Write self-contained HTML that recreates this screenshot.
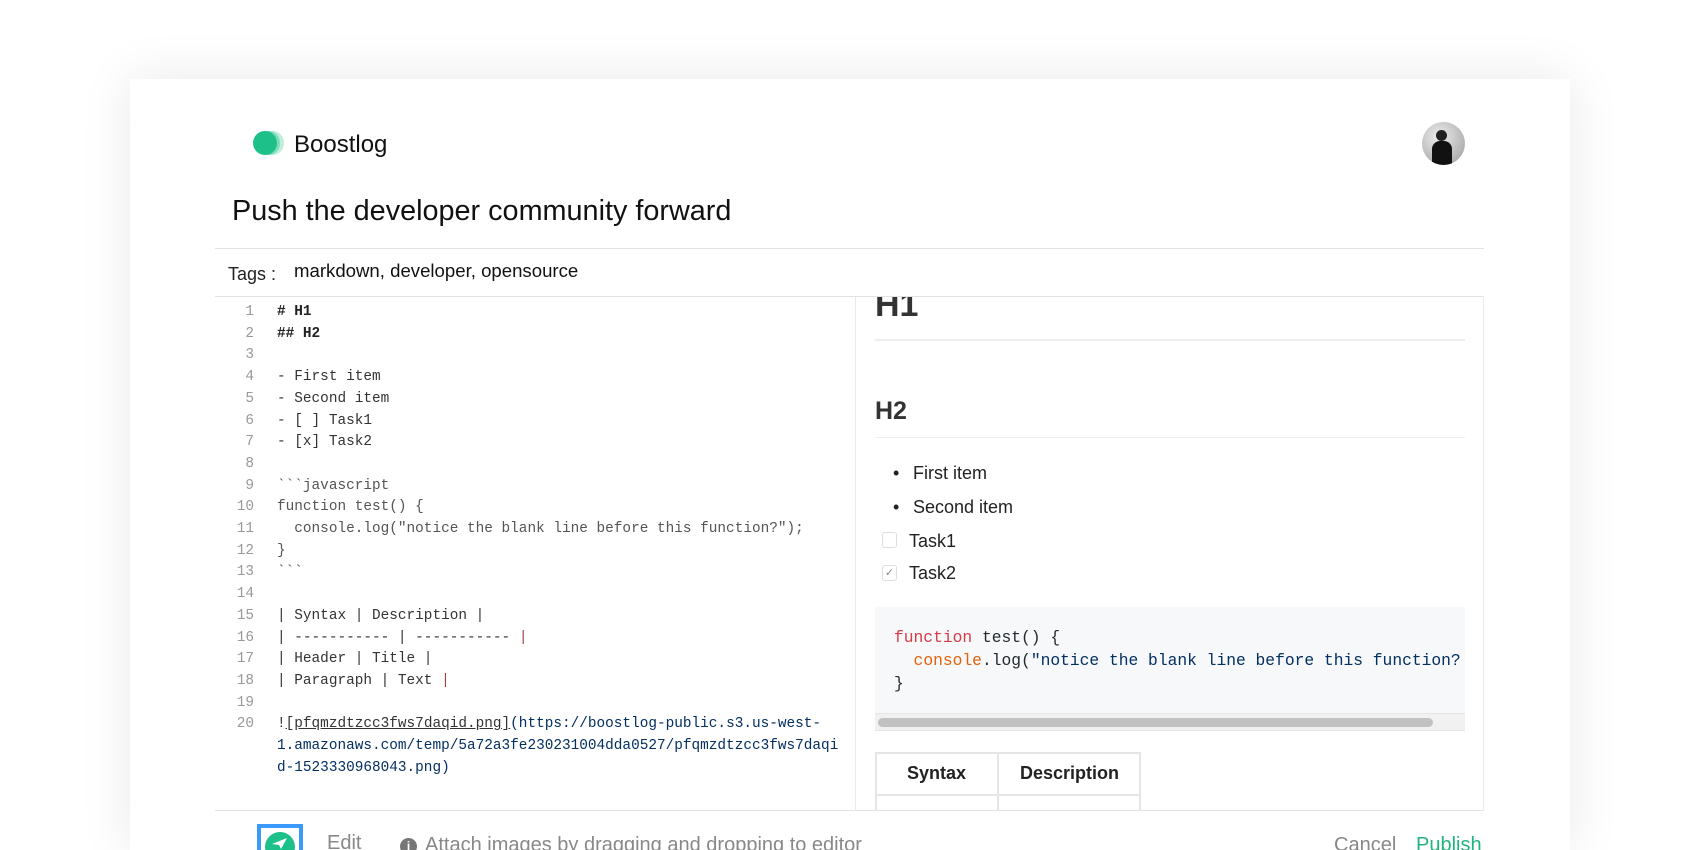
<!DOCTYPE html>
<html><head><meta charset="utf-8"><style>
*{margin:0;padding:0;box-sizing:border-box}
html,body{width:1700px;height:850px;overflow:hidden}
body{background:#fff;font-family:"Liberation Sans",sans-serif;position:relative}
.card{position:absolute;left:130px;top:79px;width:1440px;height:771px;background:#fff;box-shadow:0 0 50px rgba(0,0,0,0.09)}
.a{position:absolute;white-space:pre}
.mono{font-family:"Liberation Mono",monospace;font-size:14.4px;line-height:21.7px}
.ln{position:absolute;left:215px;width:39px;text-align:right;color:#999}
.cd{position:absolute;left:277px;color:#333}
</style></head><body>
<div class="card"></div>
<!-- logo -->
<div class="a" style="left:262px;top:131px;width:22px;height:24px;border-radius:50%;background:#bfeedd"></div>
<div class="a" style="left:258px;top:131px;width:22px;height:24px;border-radius:50%;background:#7fdcb9"></div>
<div class="a" style="left:253px;top:131px;width:24px;height:24px;border-radius:50%;background:#1ec08a"></div>
<div class="a" style="left:294px;top:131px;font-size:24px;color:#111">Boostlog</div>
<!-- avatar -->
<div class="a" style="left:1422px;top:122px;width:43px;height:43px;border-radius:50%;background:radial-gradient(circle at 40% 35%,#eee,#bbb 60%,#999);overflow:hidden">
<div style="position:absolute;left:14px;top:8px;width:11px;height:11px;border-radius:50%;background:#222"></div>
<div style="position:absolute;left:10px;top:19px;width:20px;height:26px;border-radius:8px 8px 0 0;background:#111"></div>
</div>
<div class="a" style="left:232px;top:195px;font-size:28.8px;color:#111">Push the developer community forward</div>
<div class="a" style="left:215px;top:248px;width:1269px;height:1px;background:#dfe2e6"></div>
<div class="a" style="left:228px;top:264px;font-size:18px;color:#222">Tags :</div>
<div class="a" style="left:294px;top:260px;font-size:18.6px;color:#111">markdown, developer, opensource</div>
<div class="a" style="left:215px;top:296px;width:1269px;height:515px;border-top:1px solid #dfe2e6;border-bottom:1px solid #dfe2e6;border-right:1px solid #e8eaed"></div>
<div class="a" style="left:855px;top:297px;width:1px;height:514px;background:#e8eaed"></div>
<!-- editor -->
<div class="mono">
<div class="ln" style="top:302px">1<br>2<br>3<br>4<br>5<br>6<br>7<br>8<br>9<br>10<br>11<br>12<br>13<br>14<br>15<br>16<br>17<br>18<br>19<br>20</div>
<div class="cd" style="top:302px;white-space:pre"><b style="color:#222"># H1</b>
<b style="color:#222">## H2</b>

- First item
- Second item
- [ ] Task1
- [x] Task2

<span style="color:#555">&#96;&#96;&#96;javascript
function test() {
  console.log("notice the blank line before this function?");
}
&#96;&#96;&#96;</span>

| Syntax | Description |
| ----------- | ----------- <span style="color:#944">|</span>
| Header | Title |
| Paragraph | Text <span style="color:#944">|</span>

!<u>[pfqmzdtzcc3fws7daqid.png]</u><span style="color:#032f62">(https://boostlog-public.s3.us-west-
1.amazonaws.com/temp/5a72a3fe230231004dda0527/pfqmzdtzcc3fws7daqi
d-1523330968043.png)</span></div>
</div>
<!-- preview -->
<div class="a" style="left:856px;top:297px;width:627px;height:513px;overflow:hidden">
<div class="a" style="left:19px;top:-11px;font-size:34px;font-weight:bold;color:#333">H1</div>
<div class="a" style="left:19px;top:42px;width:590px;height:2px;background:#eee"></div>
<div class="a" style="left:19px;top:100px;font-size:25px;font-weight:bold;color:#333">H2</div>
<div class="a" style="left:19px;top:140px;width:590px;height:1px;background:#eee"></div>
<div class="a" style="left:37px;top:166px;font-size:18px;color:#222">•</div>
<div class="a" style="left:57px;top:166px;font-size:18px;color:#222">First item</div>
<div class="a" style="left:37px;top:200px;font-size:18px;color:#222">•</div>
<div class="a" style="left:57px;top:200px;font-size:18px;color:#222">Second item</div>
<div class="a" style="left:26px;top:235px;width:15px;height:16px;border:1px solid #ddd;border-radius:3px"></div>
<div class="a" style="left:53px;top:234px;font-size:18px;color:#222">Task1</div>
<div class="a" style="left:26px;top:268px;width:15px;height:16px;border:1px solid #ddd;border-radius:3px;font-size:11px;color:#888;text-align:center;line-height:15px">✓</div>
<div class="a" style="left:53px;top:266px;font-size:18px;color:#222">Task2</div>
<div class="a" style="left:19px;top:310px;width:590px;height:124px;background:#f6f8fa"></div>
<div class="a mono" style="left:38px;top:329px;font-size:16.3px;line-height:23px;color:#24292e"><span style="color:#d73a49">function</span> test() {
  <span style="color:#e36209">console</span>.log(<span style="color:#032f62">"notice the blank line before this function?</span>
}</div>
<div class="a" style="left:19px;top:416px;width:590px;height:18px;background:#f1f1f1;border-top:1px solid #e6e6e6;border-bottom:1px solid #e6e6e6"></div>
<div class="a" style="left:22px;top:421px;width:555px;height:9px;border-radius:5px;background:#c1c1c1"></div>
<div class="a" style="left:19px;top:455px;width:266px;height:90px;border:2px solid #e5e5e5"></div>
<div class="a" style="left:141px;top:455px;width:2px;height:90px;background:#e5e5e5"></div>
<div class="a" style="left:19px;top:497px;width:266px;height:2px;background:#e5e5e5"></div>
<div class="a" style="left:19px;top:466px;width:123px;text-align:center;font-size:18px;font-weight:bold;color:#222">Syntax</div>
<div class="a" style="left:142px;top:466px;width:143px;text-align:center;font-size:18px;font-weight:bold;color:#222">Description</div>
</div>
<!-- footer -->
<div class="a" style="left:257px;top:824px;width:46px;height:40px;border:4px solid #3b99fc;background:#fff"></div>
<div class="a" style="left:265px;top:832px;width:30px;height:30px;border-radius:50%;background:#1ec08a"></div>
<svg class="a" style="left:270px;top:836px" width="20" height="14" viewBox="0 0 20 14"><path d="M2 8 L17 2 L11 13 L9 9 Z" fill="#fff"/></svg>
<div class="a" style="left:327px;top:832px;font-size:20px;color:#888">Edit</div>
<div class="a" style="left:400px;top:838px;width:17px;height:17px;border-radius:50%;background:#777;color:#fff;font-size:12px;font-weight:bold;text-align:center;line-height:17px">i</div>
<div class="a" style="left:425px;top:834px;font-size:20px;color:#888">Attach images by dragging and dropping to editor</div>
<div class="a" style="left:1334px;top:834px;font-size:20px;color:#888">Cancel</div>
<div class="a" style="left:1416px;top:834px;font-size:20px;color:#1fb57e">Publish</div>
</body></html>
